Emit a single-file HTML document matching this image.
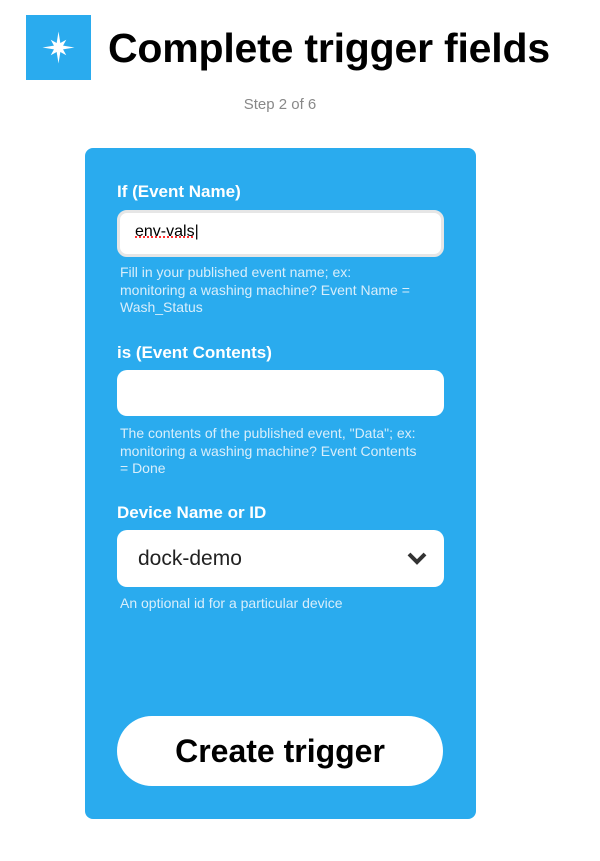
<!DOCTYPE html>
<html><head><style>
body{margin:0;width:600px;height:861px;background:#fff;font-family:"Liberation Sans",sans-serif;position:relative;overflow:hidden}
.logo{position:absolute;left:26px;top:15px;width:65px;height:65px;background:#2aabee}
h1{position:absolute;left:108px;top:25px;margin:0;font-size:41px;font-weight:bold;letter-spacing:-0.2px;color:#000;white-space:nowrap}
.step{position:absolute;left:0;width:560px;text-align:center;top:96px;font-size:15px;color:#888}
.card{position:absolute;left:85px;top:148px;width:391px;height:671px;background:#2aabee;border-radius:8px}
.lbl{position:absolute;left:32px;font-size:17px;font-weight:bold;color:#fff}
.inp{position:absolute;left:32px;width:327px;background:#fff;border-radius:10px;box-sizing:border-box}
.help{position:absolute;left:35px;width:340px;font-size:14px;line-height:17.5px;color:#d8eefb;white-space:nowrap}
.btn{position:absolute;left:32px;top:568px;width:326px;height:70px;background:#fff;border-radius:35px;text-align:center;line-height:70px;font-size:32px;font-weight:bold;color:#000}
</style></head><body>
<div class="logo"><svg width="65" height="65" viewBox="0 0 65 65"><g fill="#fff" transform="translate(32.5,32.5)"><path d="M0-16L2.2-2.2L16 0L2.2 2.2L0 16L-2.2 2.2L-16 0L-2.2-2.2Z"/><path d="M0-11L2.5-2.5L11 0L2.5 2.5L0 11L-2.5 2.5L-11 0L-2.5-2.5Z" transform="rotate(45)"/></g></svg></div>
<h1>Complete trigger fields</h1>
<div class="step">Step 2 of 6</div>
<div class="card">
<div class="lbl" style="top:34px">If (Event Name)</div>
<div class="inp" style="top:62px;height:47px;border:3px solid #e6e6e6;padding:10px 15px;font-size:16px;color:#000"><span style="text-decoration:underline dotted red">env-vals</span>|</div>
<div class="help" style="top:116px">Fill in your published event name; ex:<br>monitoring a washing machine? Event Name =<br>Wash_Status</div>
<div class="lbl" style="top:195px">is (Event Contents)</div>
<div class="inp" style="top:222px;height:46px"></div>
<div class="help" style="top:277px">The contents of the published event, "Data"; ex:<br>monitoring a washing machine? Event Contents<br>= Done</div>
<div class="lbl" style="top:355px">Device Name or ID</div>
<div class="inp" style="top:382px;height:57px;padding:17px 21px;font-size:21px;color:#222">dock-demo
<svg style="position:absolute;right:17px;top:22px" width="20" height="14" viewBox="0 0 20 14"><path d="M2 2L10 10L18 2" stroke="#333" stroke-width="4" fill="none"/></svg></div>
<div class="help" style="top:447px">An optional id for a particular device</div>
<div class="btn">Create trigger</div>
</div>
</body></html>
